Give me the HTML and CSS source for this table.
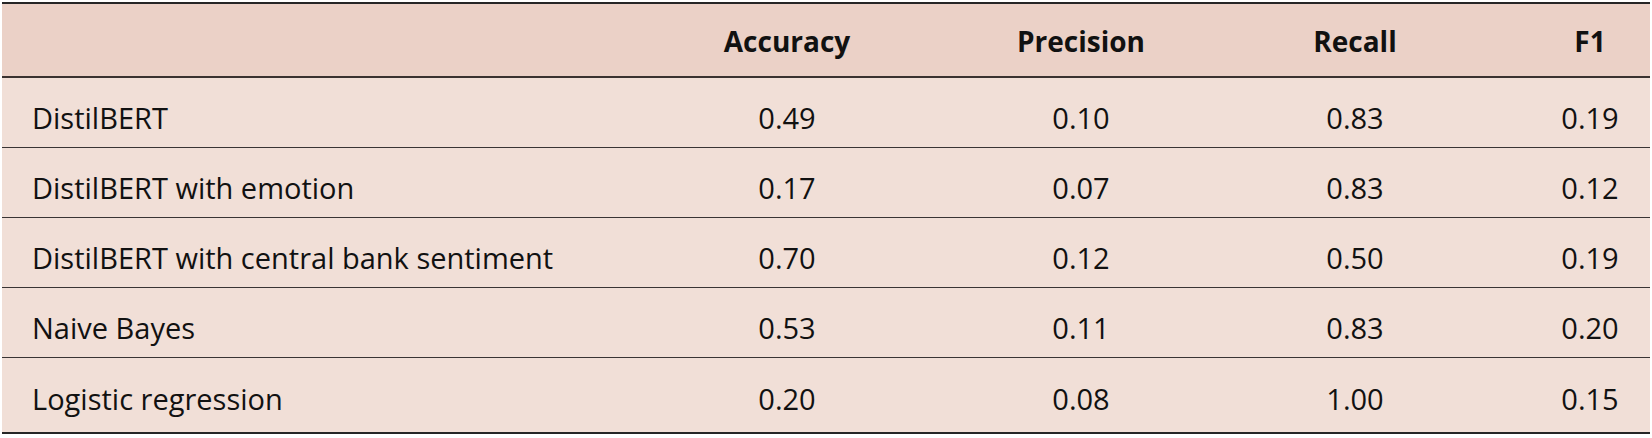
FILE: index.html
```html
<!DOCTYPE html>
<html lang="en">
<head>
<meta charset="utf-8">
<title>Model comparison</title>
<link rel="stylesheet" href="styles.css">
</head>
<body>
<table class="results">
  <colgroup>
    <col class="c-model">
    <col class="c-acc">
    <col class="c-prec">
    <col class="c-rec">
    <col class="c-f1">
  </colgroup>
  <thead>
    <tr>
      <th class="model"></th>
      <th>Accuracy</th>
      <th>Precision</th>
      <th>Recall</th>
      <th class="f1">F1</th>
    </tr>
  </thead>
  <tbody>
    <tr><td class="model">DistilBERT</td><td>0.49</td><td>0.10</td><td>0.83</td><td class="f1">0.19</td></tr>
    <tr><td class="model">DistilBERT with emotion</td><td>0.17</td><td>0.07</td><td>0.83</td><td class="f1">0.12</td></tr>
    <tr><td class="model">DistilBERT with central bank sentiment</td><td>0.70</td><td>0.12</td><td>0.50</td><td class="f1">0.19</td></tr>
    <tr><td class="model">Naive Bayes</td><td>0.53</td><td>0.11</td><td>0.83</td><td class="f1">0.20</td></tr>
    <tr class="last"><td class="model">Logistic regression</td><td>0.20</td><td>0.08</td><td>1.00</td><td class="f1">0.15</td></tr>
  </tbody>
</table>
</body>
</html>
```
FILE: styles.css
```css
html, body {
  margin: 0;
  padding: 0;
  background: #ffffff;
}

body {
  padding: 2px 2px 0 2px;
  font-family: "Open Sans", "Noto Sans", sans-serif;
  color: #111111;
}

.results {
  width: 1648px;
  border-collapse: collapse;
  table-layout: fixed;
  border-top: 2px solid #262626;
  border-bottom: 2px solid #262626;
  font-size: 29px;
  line-height: 34px;
}

.c-model { width: 638px; }
.c-acc { width: 294px; }
.c-prec { width: 294px; }
.c-rec { width: 254px; }
.c-f1 { width: 168px; }

.results thead tr {
  background: #ebd1c7;
  height: 74px;
}

.results th {
  font-weight: 700;
  font-size: 28px;
  text-align: center;
  padding: 2px 0 0 0;
  border-bottom: 2px solid #3a3230;
}

.results tbody tr {
  background: #f1dfd7;
  height: 70px;
}

.results tbody tr.last {
  height: 76px;
}

.results tbody tr + tr td {
  border-top: 1px solid #3a3434;
}

.results td {
  text-align: center;
  padding: 12px 0 0 0;
  font-weight: 400;
}

.results tbody tr.last td {
  padding-bottom: 4px;
}

.results td.model,
.results th.model {
  text-align: left;
  padding-left: 30px;
}

.results .f1 {
  padding-left: 48px;
}
```
